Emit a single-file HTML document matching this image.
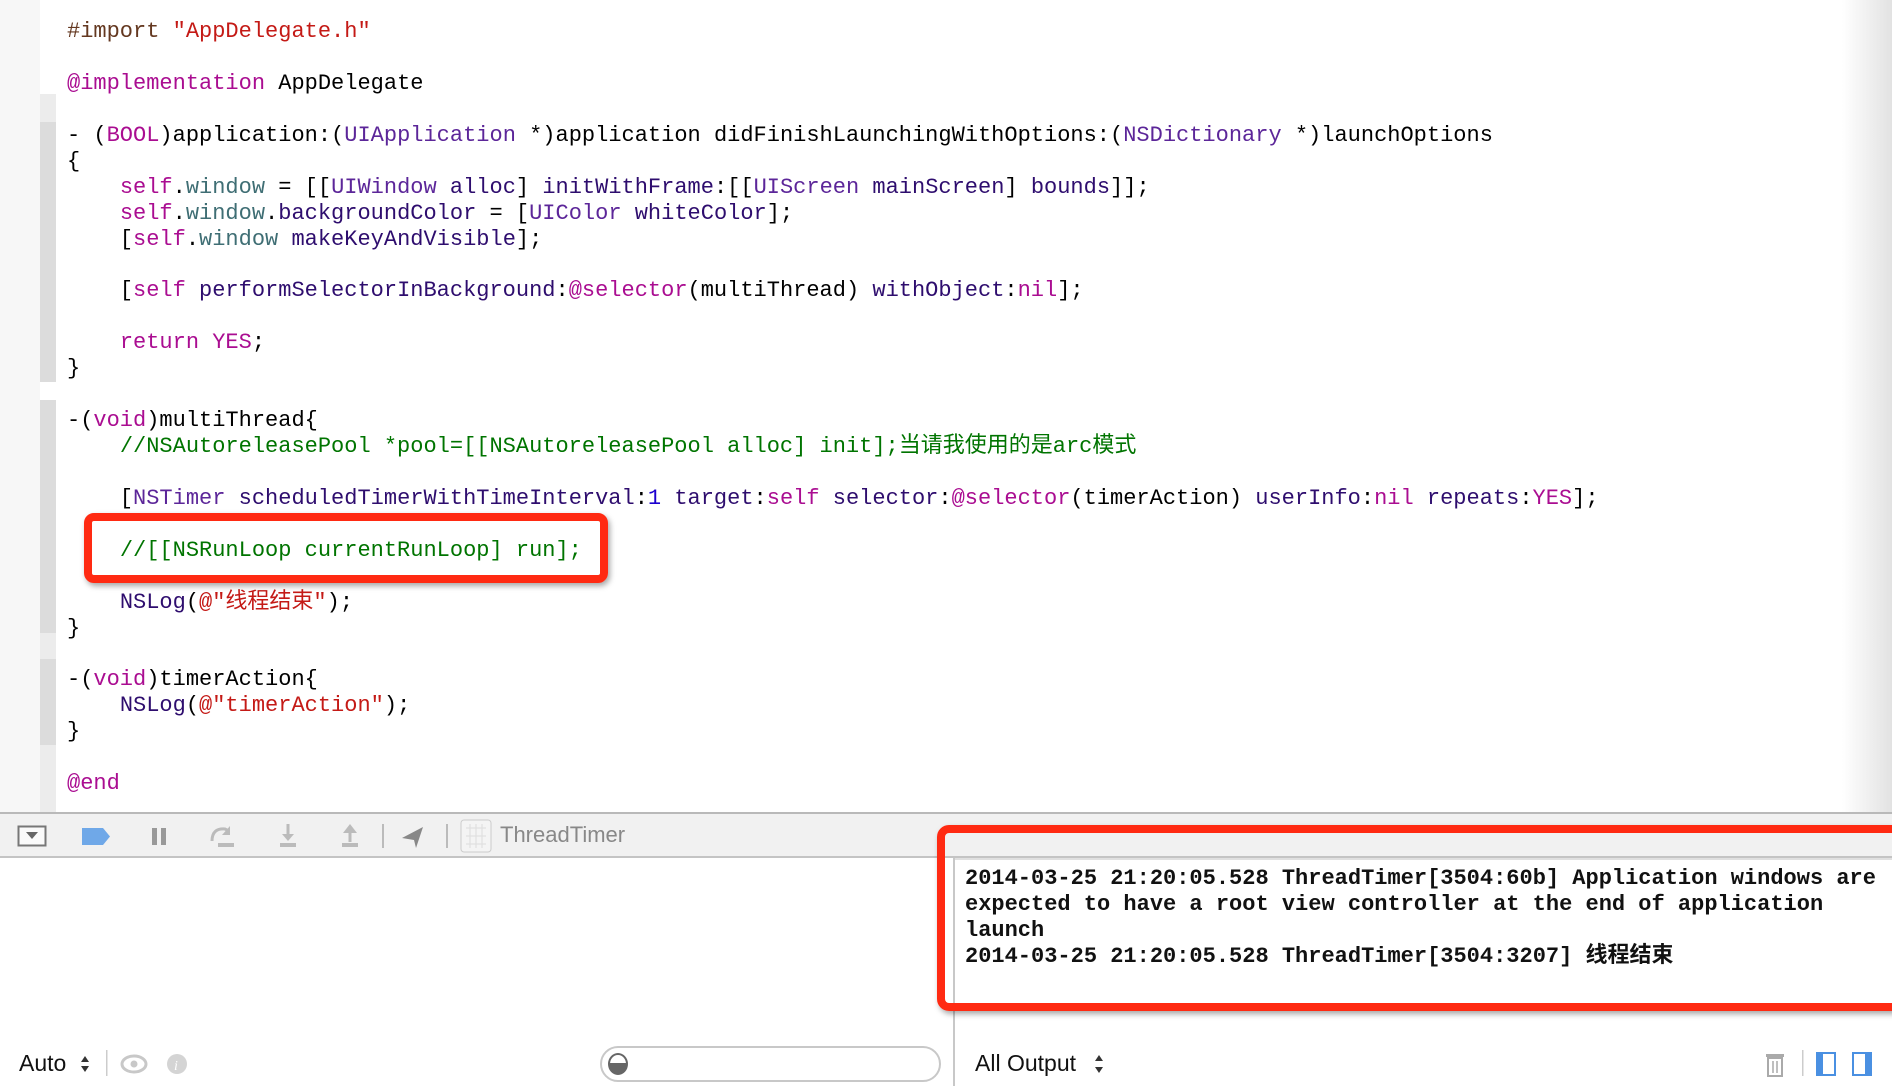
<!DOCTYPE html>
<html><head><meta charset="utf-8"><style>
*{margin:0;padding:0;box-sizing:border-box}
body{width:1892px;height:1086px;overflow:hidden;background:#fff;position:relative;font-family:"Liberation Sans","Noto Sans CJK SC",sans-serif}
#gut{position:absolute;left:0;top:0;width:40px;height:812px;background:#f7f7f7}
.strip{position:absolute;left:40px;width:16px}
pre{position:absolute;left:67px;top:19px;font-family:"Liberation Mono","Noto Sans CJK SC",monospace;font-size:22px;line-height:25.94px;color:#000;letter-spacing:0}
.k{color:#aa0d91}.s{color:#c41a16}.p{color:#643820}.c{color:#5c2699}.m{color:#2e0d6e}.pr{color:#3f6e74}.cm{color:#007400}.n{color:#1c00cf}
.box{position:absolute;border:8px solid #ff2a12;border-radius:10px;box-shadow:2px 3px 6px rgba(0,0,0,.35)}
#tb{position:absolute;left:0;top:812px;width:1892px;height:46px;background:#f1f1f1;border-top:2px solid #b9b9b9;border-bottom:2px solid #c4c4c4}
#right{position:absolute;left:953px;top:858px;width:939px;height:228px;border-left:2px solid #c8c8c8;background:#fff}
.con{position:absolute;left:965px;top:866px;font-family:"Liberation Mono","Noto Sans CJK SC",monospace;font-weight:bold;font-size:22px;line-height:25.9px;color:#111;white-space:pre}
.lbl{position:absolute;font-size:23px;color:#111}
</style></head><body>
<div id="gut"></div>
<div class="strip" style="top:94px;height:68px;background:#ececec"></div>
<div class="strip" style="top:122px;height:260px;background:#dcdcdc"></div>
<div class="strip" style="top:400px;height:233px;background:#dcdcdc"></div>
<div class="strip" style="top:633px;height:26px;background:#ececec"></div>
<div class="strip" style="top:659px;height:86px;background:#dcdcdc"></div>
<div class="strip" style="top:745px;height:67px;background:#ececec"></div>
<div style="position:absolute;right:0;top:0;width:50px;height:812px;background:linear-gradient(to right,rgba(225,225,225,0),#e2e2e2)"></div>
<pre><span class="p">#import </span><span class="s">"AppDelegate.h"</span>

<span class="k">@implementation</span> AppDelegate

- (<span class="k">BOOL</span>)application:(<span class="c">UIApplication</span> *)application didFinishLaunchingWithOptions:(<span class="c">NSDictionary</span> *)launchOptions
{
    <span class="k">self</span>.<span class="pr">window</span> = [[<span class="c">UIWindow</span> <span class="m">alloc</span>] <span class="m">initWithFrame</span>:[[<span class="c">UIScreen</span> <span class="m">mainScreen</span>] <span class="m">bounds</span>]];
    <span class="k">self</span>.<span class="pr">window</span>.<span class="m">backgroundColor</span> = [<span class="c">UIColor</span> <span class="m">whiteColor</span>];
    [<span class="k">self</span>.<span class="pr">window</span> <span class="m">makeKeyAndVisible</span>];

    [<span class="k">self</span> <span class="m">performSelectorInBackground</span>:<span class="k">@selector</span>(multiThread) <span class="m">withObject</span>:<span class="k">nil</span>];

    <span class="k">return</span> <span class="k">YES</span>;
}

-(<span class="k">void</span>)multiThread{
    <span class="cm">//NSAutoreleasePool *pool=[[NSAutoreleasePool alloc] init];当请我使用的是arc模式</span>

    [<span class="c">NSTimer</span> <span class="m">scheduledTimerWithTimeInterval</span>:<span class="n">1</span> <span class="m">target</span>:<span class="k">self</span> <span class="m">selector</span>:<span class="k">@selector</span>(timerAction) <span class="m">userInfo</span>:<span class="k">nil</span> <span class="m">repeats</span>:<span class="k">YES</span>];

    <span class="cm">//[[NSRunLoop currentRunLoop] run];</span>

    <span class="m">NSLog</span>(<span class="s">@"线程结束"</span>);
}

-(<span class="k">void</span>)timerAction{
    <span class="m">NSLog</span>(<span class="s">@"timerAction"</span>);
}

<span class="k">@end</span></pre>
<div class="box" style="left:84px;top:513px;width:524px;height:70px"></div>

<div id="tb">
<svg width="660" height="44" style="position:absolute;left:0;top:0">
<rect x="18.5" y="12.5" width="27" height="19" fill="#fafafa" stroke="#777" stroke-width="2"/>
<path d="M26 18h12l-6 7z" fill="#666"/>
<path d="M82 14h21l7 8.5-7 8.5h-21z" fill="#6fa8e8"/>
<rect x="152" y="14" width="5" height="17" fill="#999"/><rect x="161" y="14" width="5" height="17" fill="#999"/>
<path d="M212 27q0-13 13-12l4 2" fill="none" stroke="#bbb" stroke-width="3"/><path d="M230 12v9h-8z" fill="#bbb"/><rect x="218" y="29" width="16" height="4" fill="#bbb"/>
<path d="M288 10v12" stroke="#bbb" stroke-width="3"/><path d="M282 20h12l-6 7z" fill="#bbb"/><rect x="280" y="29" width="16" height="4" fill="#bbb"/>
<path d="M350 18v10" stroke="#bbb" stroke-width="3"/><path d="M343 19h14l-7-9z" fill="#bbb"/><rect x="342" y="29" width="16" height="4" fill="#bbb"/>
<rect x="382" y="10" width="2" height="24" fill="#bbb"/>
<path d="M402 24l21-11-7 21-2-8z" fill="#888"/>
<rect x="446" y="10" width="2" height="24" fill="#bbb"/>
<rect x="461" y="6" width="30" height="32" rx="3" fill="#f4f4f4" stroke="#ccc"/>
<path d="M466 14h20M466 22h20M466 30h20M470 10v24M476 10v24M482 10v24" stroke="#ddd"/>
</svg>
<div style="position:absolute;left:500px;top:8px;font-size:22px;color:#888">ThreadTimer</div>
</div>

<div id="right"></div>
<div style="position:absolute;left:955px;top:858px;width:937px;height:2px;background:#e0e0e0"></div>
<div class="con">2014-03-25 21:20:05.528 ThreadTimer[3504:60b] Application windows are
expected to have a root view controller at the end of application
launch
2014-03-25 21:20:05.528 ThreadTimer[3504:3207] 线程结束</div>
<div class="box" style="left:937px;top:825px;width:970px;height:186px;border-radius:12px"></div>

<div class="lbl" style="left:19px;top:1050px">Auto</div>
<svg width="200" height="36" style="position:absolute;left:0;top:1046px">
<path d="M85 10l-4 6h8zM85 26l-4-6h8z" fill="#333"/>
<rect x="106" y="4" width="1.5" height="26" fill="#ccc"/>
<ellipse cx="134" cy="18" rx="12" ry="8" fill="none" stroke="#c8c8c8" stroke-width="3"/><circle cx="134" cy="18" r="3.5" fill="#c8c8c8"/>
<circle cx="177" cy="18" r="10" fill="#d4d4d4"/><text x="174" y="24" font-size="14" font-style="italic" fill="#fff" font-family="Liberation Serif">i</text>
</svg>
<div style="position:absolute;left:600px;top:1046px;width:341px;height:36px;border:2px solid #c8c8c8;border-radius:18px;background:#fff"></div>
<div style="position:absolute;left:608px;top:1053px;width:20px;height:22px;border:2px solid #666;border-radius:50%;background:linear-gradient(#fff 45%,#666 45%)"></div>
<div class="lbl" style="left:975px;top:1050px">All Output</div>
<svg width="20" height="36" style="position:absolute;left:1092px;top:1046px"><path d="M7 9l-4 6h8zM7 27l-4-6h8z" fill="#333"/></svg>
<svg width="120" height="36" style="position:absolute;left:1760px;top:1046px">
<rect x="8" y="12" width="14" height="18" fill="none" stroke="#aaa" stroke-width="2"/><rect x="6" y="8" width="18" height="3" fill="#aaa"/><path d="M13 15v12M17 15v12" stroke="#aaa" stroke-width="1.5"/>
<rect x="42" y="4" width="1.5" height="26" fill="#ccc"/>
<rect x="57" y="7" width="18" height="22" fill="none" stroke="#4a90e2" stroke-width="2"/><rect x="57" y="7" width="6" height="22" fill="#4a90e2"/>
<rect x="93" y="7" width="18" height="22" fill="none" stroke="#4a90e2" stroke-width="2"/><rect x="105" y="7" width="6" height="22" fill="#4a90e2"/>
</svg>
</body></html>
